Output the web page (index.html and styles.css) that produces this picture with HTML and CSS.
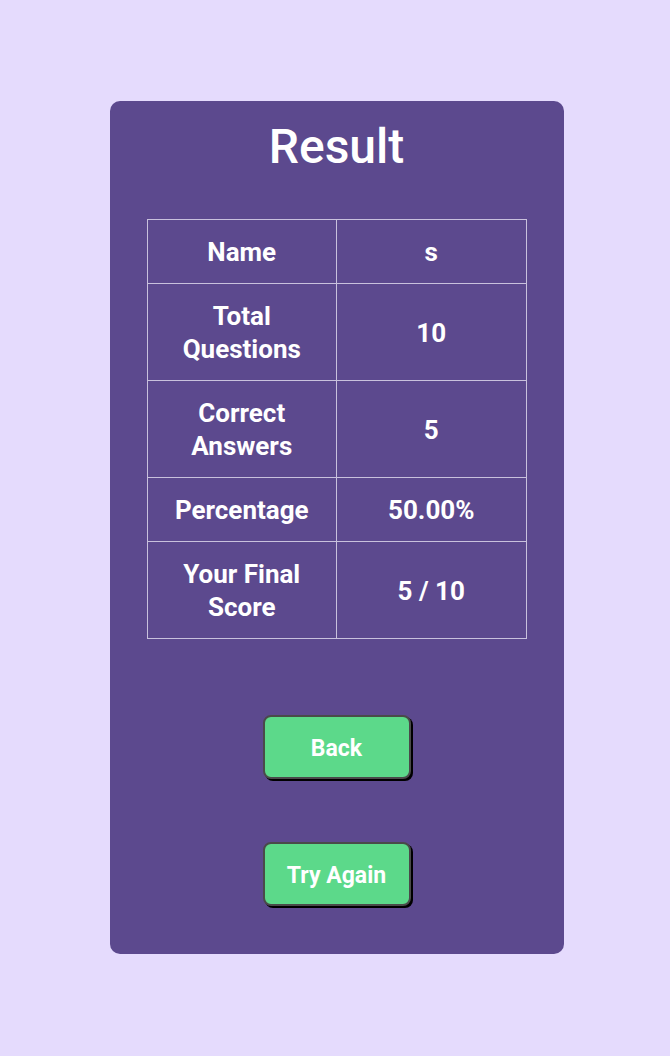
FILE: index.html
```html
<!DOCTYPE html>
<html>
<head>
<meta charset="utf-8">
<link rel="stylesheet" href="styles.css">
</head>
<body>
<div class="page">
  <div class="card">
    <h1 class="title">Result</h1>
    <table class="results">
      <tr><td>Name</td><td>s</td></tr>
      <tr><td>Total<br>Questions</td><td>10</td></tr>
      <tr><td>Correct<br>Answers</td><td>5</td></tr>
      <tr><td>Percentage</td><td>50.00%</td></tr>
      <tr><td>Your Final<br>Score</td><td>5 / 10</td></tr>
    </table>
    <div class="actions">
      <button class="btn">Back</button>
      <button class="btn">Try Again</button>
    </div>
  </div>
</div>
</body>
</html>
```
FILE: styles.css
```css
html, body {
  margin: 0;
  padding: 0;
}
body {
  background: #e5dbfd;
  font-family: Roboto, "Liberation Sans", sans-serif;
}
.page {
  display: flex;
  justify-content: center;
  padding: 101px 0 0 3px;
  min-height: 1056px;
  box-sizing: border-box;
}
.card {
  width: 454px;
  height: 853px;
  box-sizing: border-box;
  background: #5c498e;
  border-radius: 10px;
  display: flex;
  flex-direction: column;
  align-items: center;
  padding: 16px 37px 0;
}
.title {
  margin: 0;
  color: #fff;
  font-size: 48px;
  font-weight: 500;
  line-height: 60px;
}
.results {
  margin-top: 42px;
  width: 380px;
  border-collapse: collapse;
  table-layout: fixed;
  color: #fff;
  font-size: 26px;
  font-weight: 700;
  line-height: 33px;
}
.results td {
  border: 1px solid #c9c1dd;
  text-align: center;
  padding: 16px 6px 14px;
}
.actions {
  margin-top: 76px;
  display: flex;
  flex-direction: column;
  align-items: center;
  gap: 63px;
}
.btn {
  width: 148px;
  height: 64px;
  background: #5cd98a;
  color: #fff;
  font-family: Roboto, "Liberation Sans", sans-serif;
  font-size: 23px;
  font-weight: 700;
  border: 2px solid #4a4a4a;
  border-radius: 8px;
  box-shadow: 2px 2px 0 #000;
  padding: 3px 0 0;
}
```
